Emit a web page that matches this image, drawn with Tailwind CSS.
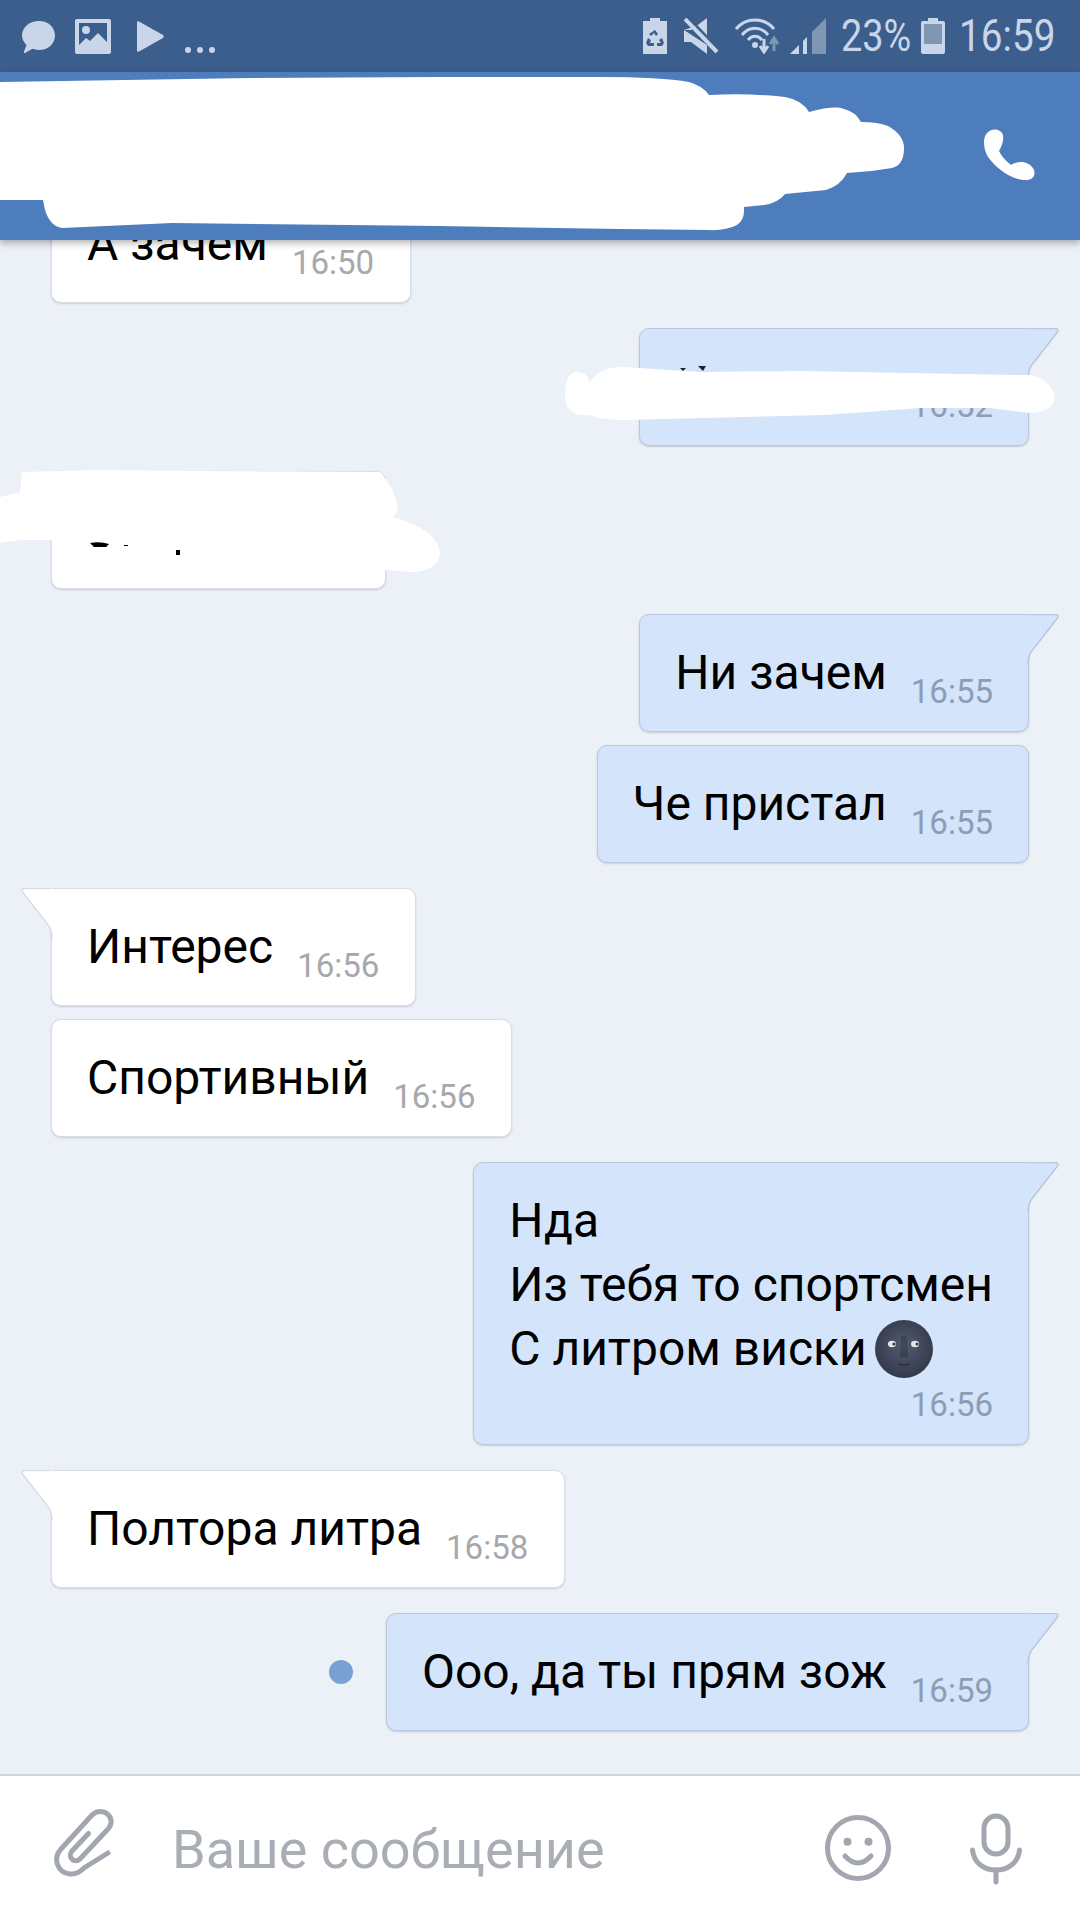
<!DOCTYPE html>
<html lang="ru">
<head>
    <meta charset="UTF-8">
    <meta name="viewport" content="width=device-width, initial-scale=1.0">
    <title>Чат</title>
    <script src="https://cdn.jsdelivr.net/npm/@tailwindcss/browser@4"></script>
</head>
<body class="bg-[#ecf0f7]">
<div class="relative w-[1080px] h-[1920px] overflow-hidden flex flex-col font-['Roboto',sans-serif] text-black">

    <!-- Status bar -->
    <div class="h-[72px] shrink-0 bg-[#3c5e8d] flex items-center justify-between pl-[22px] pr-[24px] text-[#c9d6ea]">
        <div class="flex items-center">
            <svg class="w-[33px] h-[33px] mt-[2px]" viewBox="0 0 33 33" fill="#c9d6ea"><path d="M17 0C26 0 33 6 33 14.500S26 29 17 29C14.500 29 12.500 28.500 10.500 27.800L3 32C2 32.300 1.500 31.500 2 30.500L4.500 24C2 21.500 0 18.500 0 14.500C0 6 8 0 17 0Z"/></svg>
            <svg class="w-[36px] h-[35px] ml-[20px]" viewBox="0 0 36 35"><rect width="36" height="35" rx="2" fill="#c9d6ea"/><rect x="4" y="4" width="28" height="25" fill="#3c5e8d"/><circle cx="11" cy="11" r="4" fill="#c9d6ea"/><path d="M4 26L11 19L15 22L23 14L32 23V30H4Z" fill="#c9d6ea"/></svg>
            <svg class="w-[27px] h-[31px] ml-[26px]" viewBox="0 0 27 31" fill="#c9d6ea"><path d="M0 2C0 0 1 0 2 .5L26 14C27 15 27 16 26 17L2 30.500C1 31 0 31 0 29Z"/></svg>
            <svg class="w-[31px] h-[6px] ml-[21px] mt-[27px]" viewBox="0 0 31 6" fill="#c9d6ea"><circle cx="3" cy="3" r="3"/><circle cx="15" cy="3" r="3"/><circle cx="27" cy="3" r="3"/></svg>
        </div>
        <div class="flex items-center">
            <svg class="w-[24px] h-[36px]" viewBox="0 0 24 36"><path d="M7 0H17V3H24V36H0V3H7Z" fill="#c9d6ea"/><path d="M12 12L15 16L13 18L11 15L8 18L6 16ZM5 20L8 22L7 25H11V28H5L3 25ZM19 20L21 25L19 28H14V25H18L16 22Z" fill="#3c5e8d"/></svg>
            <svg class="w-[36px] h-[36px] ml-[17px]" viewBox="0 0 36 36"><path d="M0 12H7L23 0V20L12 8ZM0 12V24H7L23 36V27Z" fill="#c9d6ea"/><path d="M1 1L33 34" stroke="#c9d6ea" stroke-width="4"/><path d="M5 0L36 32" stroke="#3c5e8d" stroke-width="2"/></svg>
            <svg class="w-[48px] h-[36px] ml-[15px]" viewBox="0 0 48 36" fill="none"><path d="M1 11C11 -1 29 -1 39 11" stroke="#c9d6ea" stroke-width="3"/><path d="M7 17C14 8 26 8 33 17" stroke="#c9d6ea" stroke-width="3"/><path d="M13 22C17 17 23 17 27 22" stroke="#c9d6ea" stroke-width="3"/><circle cx="20" cy="27" r="3" fill="#c9d6ea"/><path d="M29 21V31M25 28L29 34L33 28" stroke="#c9d6ea" stroke-width="3"/><path d="M39 33V23M35 26L39 20L43 26" stroke="#7f96b5" stroke-width="3"/></svg>
            <svg class="w-[36px] h-[36px] ml-[7px]" viewBox="0 0 36 36"><path d="M0 36L9 27V36Z" fill="#c9d6ea"/><path d="M13 36V23L17 19V36Z" fill="#c9d6ea"/><path d="M22 36V14L36 0V36Z" fill="#7f96b5"/></svg>
            <span class="w-[78px] ml-[15px] text-[44px] leading-none origin-left scale-x-[.86] whitespace-nowrap">23%</span>
            <svg class="w-[24px] h-[36px] ml-[2px]" viewBox="0 0 24 36"><path d="M7 0H17V3H22Q24 3 24 5V34Q24 36 22 36H2Q0 36 0 34V5Q0 3 2 3H7Z" fill="#c9d6ea"/><rect x="3" y="6" width="18" height="20" fill="#7f96b5"/></svg>
            <span class="w-[97px] ml-[14px] text-[44px] leading-none origin-left scale-x-[.88] whitespace-nowrap">16:59</span>
        </div>
    </div>

    <!-- Header -->
    <header class="relative z-10 h-[168px] shrink-0 bg-[#4d7dbd] shadow-[0_3px_7px_rgba(0,0,0,0.3)] flex items-center justify-end pr-[20px]">
        <svg class="w-[100px] h-[90px] mt-[-2px]" viewBox="0 0 100 90" fill="#fff"><path d="M24 32C24 22 33 17 40 21C45 24 44 32 39 41C42 47 46 51 51 55C58 50 70 51 74 60C76 66 72 71 64 70C50 69 36 58 28 47C25 42 24 37 24 32Z"/></svg>
    </header>

    <!-- Messages -->
    <main class="flex-1 overflow-hidden flex flex-col pl-[51px] pr-[51px]">

        <div class="relative self-start mt-[-55px] flex pl-[35px] pr-[36px] py-[26px] bg-white rounded-[10px] border border-[#d9dde6] shadow-[0_1px_2px_rgba(90,100,130,0.25)]">
            <span class="text-[48px] leading-[64px]">А зачем</span>
            <span class="self-end mb-[-7px] ml-[24px] text-[33px] leading-[40px] text-[#a6a8ad]">16:50</span>
        </div>

        <div class="relative self-end w-[390px] h-[118px] mt-[25px] flex justify-end items-end pr-[35px] pb-[19px] bg-[#d4e4fb] rounded-[10px] rounded-tr-none border border-[#b9c8e0] shadow-[0_1px_2px_rgba(90,100,130,0.25)]">
            <span class="text-[33px] leading-[40px] text-[#8c9db5]">16:52</span>
            <svg class="absolute right-[-31px] top-[-1px] w-[32px] h-[50px]" viewBox="0 0 32 50"><path d="M0 0H28Q32 0 30.500 4L4 38Q1.500 42 1 50H0Z" fill="#d4e4fb"/><path d="M1 .5H28Q32 .5 30.500 4L4 38Q1.500 42 1 50" fill="none" stroke="#b9c8e0" stroke-width="1.500"/></svg>
        </div>

        <div class="relative self-start w-[335px] h-[118px] mt-[25px] bg-white rounded-[10px] border border-[#d9dde6] shadow-[0_1px_2px_rgba(90,100,130,0.25)]"></div>

        <div class="relative self-end mt-[25px] flex px-[35px] py-[26px] bg-[#d4e4fb] rounded-[10px] rounded-tr-none border border-[#b9c8e0] shadow-[0_1px_2px_rgba(90,100,130,0.25)]">
            <span class="text-[48px] leading-[64px]">Ни зачем</span>
            <span class="self-end mb-[-7px] ml-[24px] text-[33px] leading-[40px] text-[#8c9db5]">16:55</span>
            <svg class="absolute right-[-31px] top-[-1px] w-[32px] h-[50px]" viewBox="0 0 32 50"><path d="M0 0H28Q32 0 30.500 4L4 38Q1.500 42 1 50H0Z" fill="#d4e4fb"/><path d="M1 .5H28Q32 .5 30.500 4L4 38Q1.500 42 1 50" fill="none" stroke="#b9c8e0" stroke-width="1.500"/></svg>
        </div>

        <div class="relative self-end mt-[13px] flex px-[35px] py-[26px] bg-[#d4e4fb] rounded-[10px] border border-[#b9c8e0] shadow-[0_1px_2px_rgba(90,100,130,0.25)]">
            <span class="text-[48px] leading-[64px]">Че пристал</span>
            <span class="self-end mb-[-7px] ml-[24px] text-[33px] leading-[40px] text-[#8c9db5]">16:55</span>
        </div>

        <div class="relative self-start mt-[25px] flex pl-[35px] pr-[36px] py-[26px] bg-white rounded-[10px] rounded-tl-none border border-[#d9dde6] shadow-[0_1px_2px_rgba(90,100,130,0.25)]">
            <span class="text-[48px] leading-[64px]">Интерес</span>
            <span class="self-end mb-[-7px] ml-[24px] text-[33px] leading-[40px] text-[#a6a8ad]">16:56</span>
            <svg class="absolute left-[-31px] top-[-1px] w-[32px] h-[50px] -scale-x-100" viewBox="0 0 32 50"><path d="M0 0H28Q32 0 30.500 4L4 38Q1.500 42 1 50H0Z" fill="#fff"/><path d="M1 .5H28Q32 .5 30.500 4L4 38Q1.500 42 1 50" fill="none" stroke="#d9dde6" stroke-width="1.500"/></svg>
        </div>

        <div class="relative self-start mt-[13px] flex pl-[35px] pr-[36px] py-[26px] bg-white rounded-[10px] border border-[#d9dde6] shadow-[0_1px_2px_rgba(90,100,130,0.25)]">
            <span class="text-[48px] leading-[64px]">Спортивный</span>
            <span class="self-end mb-[-7px] ml-[24px] text-[33px] leading-[40px] text-[#a6a8ad]">16:56</span>
        </div>

        <div class="relative self-end mt-[25px] px-[35px] pt-[26px] pb-[19px] bg-[#d4e4fb] rounded-[10px] rounded-tr-none border border-[#b9c8e0] shadow-[0_1px_2px_rgba(90,100,130,0.25)]">
            <div class="text-[48px] leading-[64px] whitespace-nowrap">
                <div>Нда</div>
                <div>Из тебя то спортсмен</div>
                <div class="flex items-center h-[64px]">С литром виски
                    <svg class="w-[58px] h-[58px] ml-[8px]" viewBox="0 0 58 58">
                        <defs><radialGradient id="moon" cx="50%" cy="45%" r="55%"><stop offset="0" stop-color="#535b6f"/><stop offset="1" stop-color="#343a4c"/></radialGradient></defs>
                        <circle cx="29" cy="29" r="29" fill="url(#moon)"/>
                        <ellipse cx="17" cy="24" rx="4" ry="3.200" fill="#e4e6ea"/><circle cx="19" cy="24" r="1.600" fill="#4a3a30"/>
                        <ellipse cx="40" cy="24" rx="4" ry="3.200" fill="#e4e6ea"/><circle cx="42" cy="24" r="1.600" fill="#4a3a30"/>
                        <path d="M26 16C26 26 25 33 24 36C27 38 31 38 34 36C33 33 32 26 32 16" fill="#2b3040" opacity=".45"/>
                        <path d="M23 44Q29 46 35 44" stroke="#2b3040" stroke-width="1.500" fill="none"/>
                    </svg>
                </div>
            </div>
            <div class="mt-[4px] text-right text-[33px] leading-[40px] text-[#8c9db5]">16:56</div>
            <svg class="absolute right-[-31px] top-[-1px] w-[32px] h-[50px]" viewBox="0 0 32 50"><path d="M0 0H28Q32 0 30.500 4L4 38Q1.500 42 1 50H0Z" fill="#d4e4fb"/><path d="M1 .5H28Q32 .5 30.500 4L4 38Q1.500 42 1 50" fill="none" stroke="#b9c8e0" stroke-width="1.500"/></svg>
        </div>

        <div class="relative self-start mt-[25px] flex pl-[35px] pr-[36px] py-[26px] bg-white rounded-[10px] rounded-tl-none border border-[#d9dde6] shadow-[0_1px_2px_rgba(90,100,130,0.25)]">
            <span class="text-[48px] leading-[64px]">Полтора литра</span>
            <span class="self-end mb-[-7px] ml-[24px] text-[33px] leading-[40px] text-[#a6a8ad]">16:58</span>
            <svg class="absolute left-[-31px] top-[-1px] w-[32px] h-[50px] -scale-x-100" viewBox="0 0 32 50"><path d="M0 0H28Q32 0 30.500 4L4 38Q1.500 42 1 50H0Z" fill="#fff"/><path d="M1 .5H28Q32 .5 30.500 4L4 38Q1.500 42 1 50" fill="none" stroke="#d9dde6" stroke-width="1.500"/></svg>
        </div>

        <div class="self-end mt-[25px] flex items-center">
            <span class="w-[24px] h-[24px] mr-[33px] rounded-full bg-[#7aa1d3]"></span>
            <div class="relative flex px-[35px] py-[26px] bg-[#d4e4fb] rounded-[10px] rounded-tr-none border border-[#b9c8e0] shadow-[0_1px_2px_rgba(90,100,130,0.25)]">
                <span class="text-[48px] leading-[64px]">Ооо, да ты прям зож</span>
                <span class="self-end mb-[-7px] ml-[24px] text-[33px] leading-[40px] text-[#8c9db5]">16:59</span>
                <svg class="absolute right-[-31px] top-[-1px] w-[32px] h-[50px]" viewBox="0 0 32 50"><path d="M0 0H28Q32 0 30.500 4L4 38Q1.500 42 1 50H0Z" fill="#d4e4fb"/><path d="M1 .5H28Q32 .5 30.500 4L4 38Q1.500 42 1 50" fill="none" stroke="#b9c8e0" stroke-width="1.500"/></svg>
            </div>
        </div>
    </main>

    <!-- Input bar -->
    <footer class="h-[146px] shrink-0 bg-white border-t-[2px] border-[#ccd2e0] flex items-center pl-[40px] pr-[56px] text-[#a9adb4]">
        <svg class="w-[100px] h-[100px] mt-[-4px]" viewBox="0 0 100 100" fill="none" stroke="#a2a6af" stroke-width="5" stroke-linecap="round"><path d="M48.500 37.500L32 55C27 61 34 68 40 63L68 33C78 22 62 9 52 19L21 53C12 63 18 77 30 78C36 78.500 40 76 44 72L68 57"/></svg>
        <span class="ml-[32px] mt-[4px] text-[54px] leading-none whitespace-nowrap">Ваше сообщение</span>
        <svg class="w-[66px] h-[100px] ml-auto" viewBox="0 0 66 100" fill="none" stroke="#a2a6af" stroke-width="5" stroke-linecap="round"><circle cx="33" cy="50" r="30.500"/><circle cx="22.500" cy="43.700" r="4" fill="#a2a6af" stroke="none"/><circle cx="43.500" cy="43.700" r="4" fill="#a2a6af" stroke="none"/><path d="M20 58Q33 72 46 58"/></svg>
        <svg class="w-[56px] h-[100px] ml-[77px]" viewBox="0 0 56 100" fill="none" stroke="#a2a6af" stroke-width="5" stroke-linecap="round"><rect x="16" y="18" width="24" height="38" rx="12"/><path d="M4.500 52C6 66 17 72 28 72C39 72 50 66 51.500 52"/><path d="M28 72V84"/></svg>
    </footer>

    <!-- Scribbled-over parts of the screenshot -->
    <svg class="absolute left-0 top-0 w-[1080px] h-[800px] z-20 pointer-events-none" viewBox="0 0 1080 800" fill="#fff">
        <path d="M0 82L250 78L440 77H600Q660 77 689 82Q703 86 709 95Q750 93 785 97Q802 100 809 112Q835 105 844 109Q856 112 861 122Q878 122 888 126Q904 135 904 148Q904 165 892 168Q870 172 847 173Q840 186 826 190L785 194Q778 203 764 205L744 207Q745 220 737 225Q725 231 709 230L620 229L440 226L172 223L62 228Q50 226 45 210L43 200L0 200Z"/>
        <path d="M565 395Q565 375 575 372Q585 370 590 382Q600 366 625 367L700 372L800 371L1020 375Q1045 372 1055 395Q1055 412 1030 413L990 408L920 408L826 415L625 420Q600 420 590 415Q565 418 565 395Z"/>
        <path d="M0 497L20 492L22 472L100 470L200 471L380 472Q396 490 398 510L393 517Q440 530 440 555Q436 572 410 572L386 570H52V540L20 540L0 543Z"/>
        <path d="M90 543Q100 541 109 544L106 547H94ZM124 545H128V546H124ZM176 550H180V555H176Z" fill="#000"/>
        <path d="M680 368L683 371L686 368ZM698 366L703 371L706 366Z" fill="#222"/>
    </svg>
</div>
</body>
</html>
